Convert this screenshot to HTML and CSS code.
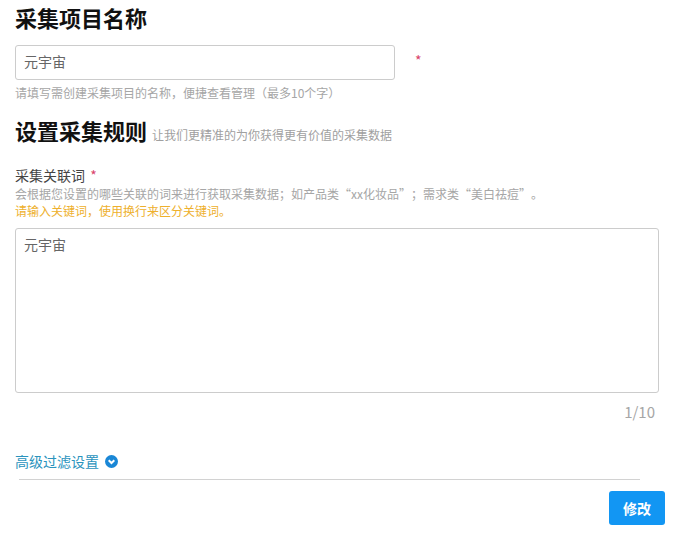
FILE: index.html
```html
<!DOCTYPE html>
<html lang="zh-CN">
<head>
<meta charset="utf-8">
<title>采集项目</title>
<link rel="stylesheet" href="styles.css">
</head>
<body>
<main class="page">
  <h2 class="title first">采集项目名称</h2>
  <div class="name-row">
    <div class="input">元宇宙</div>
    <span class="star star-side">*</span>
  </div>
  <p class="hint">请填写需创建采集项目的名称，便捷查看管理（最多10个字）</p>
  <div class="rule-head">
    <h2 class="title">设置采集规则</h2>
    <span class="sub">让我们更精准的为你获得更有价值的采集数据</span>
  </div>
  <div class="label">采集关联词 <span class="star star-label">*</span></div>
  <p class="desc">会根据您设置的哪些关联的词来进行获取采集数据；如产品类“xx化妆品”；需求类“美白祛痘”。</p>
  <p class="warn">请输入关键词，使用换行来区分关键词。</p>
  <div class="textarea">元宇宙</div>
  <div class="count">1/10</div>
  <div class="advanced">
    <span>高级过滤设置</span>
    <svg class="chev" width="13" height="13" viewBox="0 0 13 13" aria-hidden="true">
      <circle cx="6.5" cy="6.5" r="6.5" fill="#1a87d6"/>
      <path d="M3.7 5.3 6.5 8 9.3 5.3" fill="none" stroke="#fff" stroke-width="2"/>
    </svg>
  </div>
  <div class="rule"></div>
  <div class="actions"><button class="btn">修改</button></div>
</main>
</body>
</html>
```
FILE: styles.css
```css
* { box-sizing: border-box; }
html, body { margin: 0; padding: 0; background: #fff; }
body {
  width: 674px;
  height: 536px;
  overflow: hidden;
  font-family: "Noto Sans CJK SC", "Liberation Sans", sans-serif;
  color: #333;
  text-spacing-trim: space-all;
}
.page { padding: 2px 9px 0 15px; }
.title {
  margin: 0;
  font-size: 22px;
  line-height: 30px;
  font-weight: 700;
  color: #111;
}
.name-row {
  display: flex;
  align-items: flex-start;
  margin-top: 13px;
}
.input {
  width: 380px;
  height: 35px;
  padding: 0 8px;
  border: 1px solid #ccc;
  border-radius: 3px;
  font-size: 14px;
  line-height: 31px;
  color: #666;
}
.star { color: #d9436b; font-size: 14px; }
.star-side { margin: 7px 0 0 20px; line-height: 16px; }
.star-label { margin-left: 2px; }
.hint {
  margin: 4px 0 0;
  font-size: 12px;
  line-height: 18px;
  color: #a6a6a6;
}
.rule-head {
  display: flex;
  align-items: baseline;
  gap: 5px;
  margin-top: 13px;
}
.sub { font-size: 12px; color: #a0a0a0; }
.label {
  margin-top: 21px;
  font-size: 14px;
  line-height: 18px;
  color: #444;
}
.desc, .warn {
  margin: 0;
  font-size: 12px;
  line-height: 17px;
  color: #a6a6a6;
}
.desc { margin-top: 1px; }
.warn { color: #eeb02c; margin-top: 0; }
.textarea {
  width: 644px;
  height: 165px;
  margin-top: 9px;
  padding: 6px 8px;
  border: 1px solid #ccc;
  border-radius: 3px;
  font-size: 14px;
  line-height: 18px;
  color: #666;
}
.count {
  width: 640px;
  margin-top: 9px;
  text-align: right;
  font-size: 15px;
  line-height: 20px;
  color: #a6a6a6;
}
.advanced {
  display: flex;
  align-items: center;
  gap: 6px;
  margin-top: 30px;
  font-size: 14px;
  line-height: 18px;
  color: #2a93bd;
}
.rule {
  width: 621px;
  height: 1px;
  margin: 9px 0 0 4px;
  background: #d2d2d2;
}
.actions { display: flex; justify-content: flex-end; margin-top: 11px; }
.btn {
  width: 56px;
  height: 34px;
  border: 0;
  border-radius: 3px;
  background: #1296f3;
  color: #fff;
  font: 700 14px "Noto Sans CJK SC", "Liberation Sans", sans-serif;
}
```
